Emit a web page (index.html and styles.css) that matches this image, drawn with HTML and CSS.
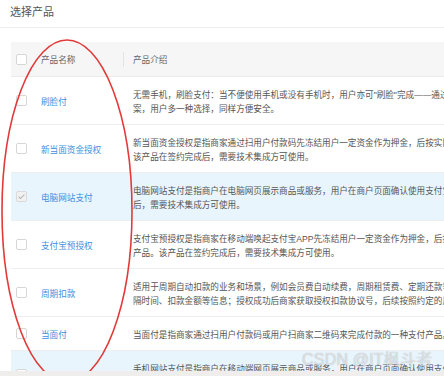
FILE: index.html
```html
<!DOCTYPE html>
<html lang="zh">
<head>
<meta charset="utf-8">
<link rel="stylesheet" href="styles.css">
</head>
<body>
<div class="panel">
  <div class="title">选择产品</div>
  <table class="grid">
    <colgroup><col class="c-cb"><col class="c-name"><col class="c-desc"></colgroup>
    <thead>
      <tr><th class="cb-cell"><span class="cb"></span></th><th class="name">产品名称</th><th class="desc sep">产品介绍</th></tr>
    </thead>
    <tbody>
      <tr><td class="cb-cell"><span class="cb"></span></td><td class="name">刷脸付</td><td class="desc">无需手机，刷脸支付：当不便使用手机或没有手机时，用户亦可"刷脸"完成——通过人脸识别完成支付，为商户提供更便捷的收银方<br>案，用户多一种选择，同样方便安全。</td></tr>
      <tr><td class="cb-cell"><span class="cb"></span></td><td class="name">新当面资金授权</td><td class="desc">新当面资金授权是指商家通过扫用户付款码先冻结用户一定资金作为押金，后按实际消费金额扣款的一种支付产品。<br>该产品在签约完成后，需要技术集成方可使用。</td></tr>
      <tr class="on"><td class="cb-cell"><span class="cb checked"></span></td><td class="name">电脑网站支付</td><td class="desc">电脑网站支付是指商户在电脑网页展示商品或服务，用户在商户页面确认使用支付宝支付后，跳转到支付宝页面完成付款的支付产品。该产品在签约完成<br>后，需要技术集成方可使用。</td></tr>
      <tr><td class="cb-cell"><span class="cb"></span></td><td class="name">支付宝预授权</td><td class="desc">支付宝预授权是指商家在移动端唤起支付宝APP先冻结用户一定资金作为押金，后按实际消费金额扣款的一种支付<br>产品。该产品在签约完成后，需要技术集成方可使用。</td></tr>
      <tr><td class="cb-cell"><span class="cb"></span></td><td class="name">周期扣款</td><td class="desc">适用于周期自动扣款的业务和场景，例如会员费自动续费，周期租赁费、定期还款等。用户在签约时需确认扣款周期、间<br>隔时间、扣款金额等信息；授权成功后商家获取授权扣款协议号，后续按照约定的周期进行扣款。</td></tr>
      <tr class="single"><td class="cb-cell"><span class="cb"></span></td><td class="name">当面付</td><td class="desc">当面付是指商家通过扫用户付款码或用户扫商家二维码来完成付款的一种支付产品。</td></tr>
      <tr class="on"><td class="cb-cell"><span class="cb"></span></td><td class="name">手机网站支付</td><td class="desc">手机网站支付是指商户在移动端网页展示商品或服务，用户在商户页面确认使用支付宝支付后，跳转到支付宝完成付款的支付产品。<br>该产品在签约完成后，需要技术集成方可使用。</td></tr>
    </tbody>
  </table>
  <svg class="ring" width="444" height="376" viewBox="0 0 444 376">
    <ellipse cx="67" cy="211" rx="65" ry="171" fill="none" stroke="#e23a3a" stroke-width="1.6"/>
  </svg>
  <div class="mark">CSDN @IT枫斗者</div>
</div>
</body>
</html>
```

FILE: styles.css
```css
html, body {
  margin: 0;
  padding: 0;
  background: #efeeec;
}
body {
  font-family: "Liberation Sans", "Noto Sans CJK SC", sans-serif;
  width: 444px;
  height: 376px;
  overflow: hidden;
}
.panel {
  position: relative;
  background: #fff;
  height: 371px;
  overflow: hidden;
}
.title {
  height: 28px;
  line-height: 25px;
  padding-left: 10px;
  font-size: 11px;
  color: #555;
  border-bottom: 1px solid #eeeeee;
  box-sizing: border-box;
}
.grid {
  margin: 14px 0 0 11px;
  border-collapse: collapse;
  table-layout: fixed;
  width: 900px;
  font-size: 8.6px;
}
.c-cb { width: 30px; }
.c-name { width: 82px; }
.grid th {
  background: #f6f6f6;
  height: 34px;
  padding: 0;
  font-weight: normal;
  color: #666;
  text-align: left;
  border-bottom: 1px solid #ebebeb;
  position: relative;
}
.grid th.desc { padding-left: 10px; }
.grid th.sep::before {
  content: "";
  position: absolute;
  left: 0;
  top: 10px;
  height: 15px;
  width: 1px;
  background: #e4e4e4;
}
.grid td {
  padding: 0;
  border-bottom: 1px solid #eeeeee;
  vertical-align: middle;
}
.grid td.cb-cell, .grid th.cb-cell { padding-left: 5px; }
.grid td.name {
  color: #3d8fe0;
  white-space: nowrap;
}
.grid td.desc {
  padding: 11px 0 8px 10px;
  line-height: 14px;
  color: #555;
  white-space: nowrap;
}
.grid tr.on td { background: #e9f5fd; }
.cb {
  display: block;
  width: 9px;
  height: 9px;
  border: 1px solid #d6d6d6;
  border-radius: 2px;
  background: #fff;
  position: relative;
}
.cb.checked {
  background: #f1f1f1;
  border-color: #dadada;
}
.cb.checked::after {
  content: "";
  position: absolute;
  left: 3px;
  top: 1px;
  width: 2px;
  height: 5px;
  border: solid #b5b5b5;
  border-width: 0 1px 1px 0;
  transform: rotate(45deg);
}
.ring {
  position: absolute;
  left: 0;
  top: 0;
  pointer-events: none;
}
.mark {
  position: absolute;
  left: 302px;
  top: 346px;
  font-size: 16px;
  color: rgba(255, 255, 255, 0.6);
  text-shadow: 0 0 1px rgba(110, 110, 110, 0.6);
  white-space: nowrap;
  letter-spacing: 0.2px;
}
```
